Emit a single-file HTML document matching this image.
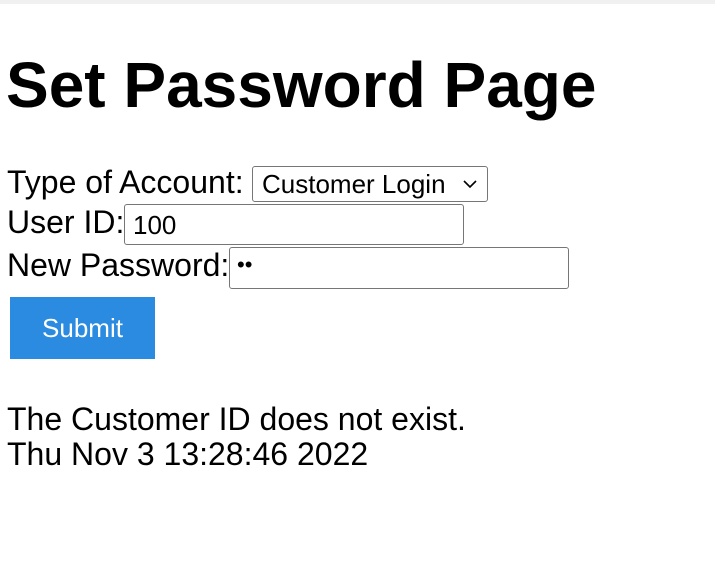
<!DOCTYPE html>
<html><head><meta charset="utf-8"><style>
html,body{margin:0;padding:0;width:715px;height:584px;overflow:hidden;background:#fff;font-family:"Liberation Sans",Arial,sans-serif;color:#000}
.bar{position:absolute;left:0;top:0;width:715px;height:4px;background:#f0f0f0}
.t{position:absolute;left:7px;font-size:32px;line-height:36px;white-space:nowrap}
h1{position:absolute;left:6px;top:48px;margin:0;font-size:64px;line-height:74px;font-weight:bold;white-space:nowrap}
.box{position:absolute;box-sizing:border-box;border:1.5px solid #767676;border-radius:3px;background:#fff;font-size:26px;line-height:1;white-space:nowrap}
.btn{position:absolute;left:10px;top:297px;width:145px;height:62px;background:#2a8be0;color:#fff;font-size:26px;line-height:62px;text-align:center}
</style></head><body>
<div class="bar"></div>
<h1>Set Password Page</h1>
<div class="t" style="top:164px">Type of Account:</div>
<div class="box" style="left:252px;top:166px;width:236px;height:36px;padding:4px 0 0 9px">Customer Login
<svg style="position:absolute;right:10px;top:12px" width="14" height="10" viewBox="0 0 14 10"><path d="M1 2 L7 8 L13 2" fill="none" stroke="#000" stroke-width="1.6"/></svg></div>
<div class="t" style="top:204px">User ID:</div>
<div class="box" style="left:124px;top:204px;width:340px;height:41px;padding:7px 0 0 8px">100</div>
<div class="t" style="top:247px">New Password:</div>
<div class="box" style="left:229px;top:247px;width:340px;height:42px;padding:6px 0 0 7px;font-size:22px">••</div>
<div class="btn">Submit</div>
<div class="t" style="top:401px">The Customer ID does not exist.</div>
<div class="t" style="top:436px">Thu Nov 3 13:28:46 2022</div>
</body></html>
